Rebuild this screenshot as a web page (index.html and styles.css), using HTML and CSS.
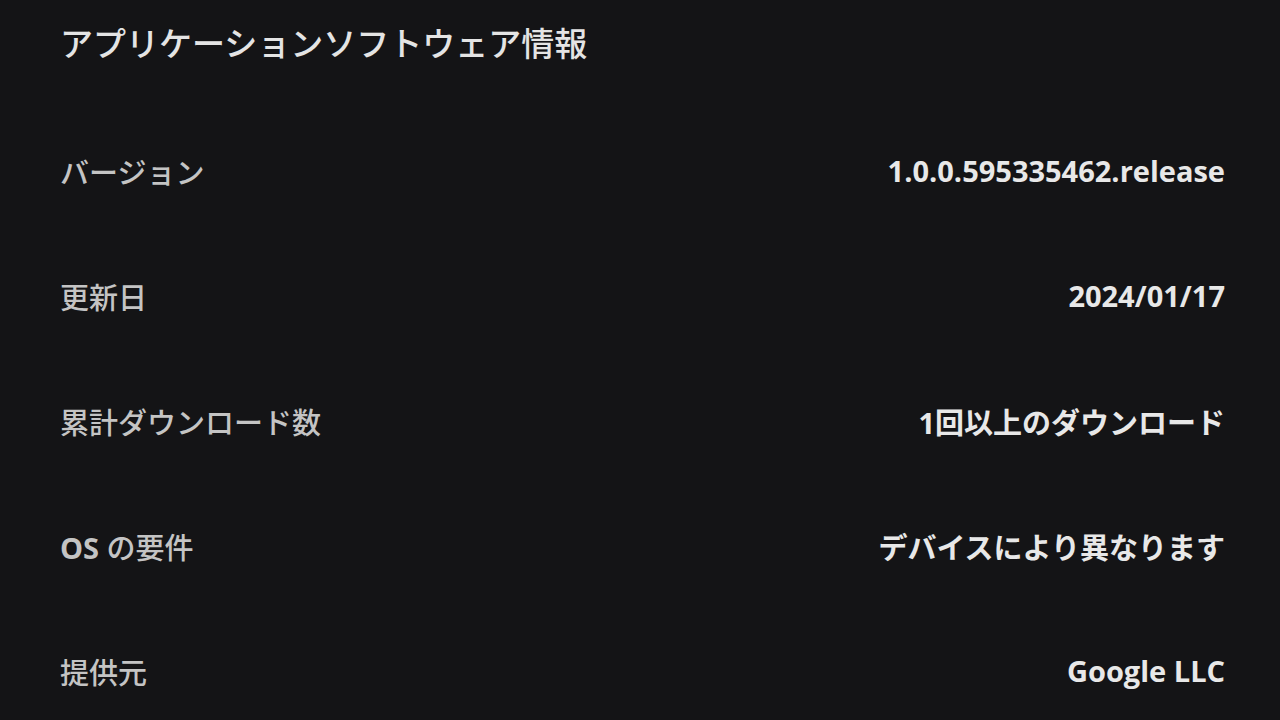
FILE: index.html
```html
<!DOCTYPE html>
<html lang="ja">
<head>
  <meta charset="UTF-8">
  <title>アプリケーションソフトウェア情報</title>
  <link rel="stylesheet" href="styles.css">
</head>
<body>
  <div class="panel">
    <h1 class="title">アプリケーションソフトウェア情報</h1>

    <div class="info-list">
      <div class="info-row">
        <span class="label">バージョン</span>
        <span class="value">1.0.0.595335462.release</span>
      </div>
      <div class="info-row">
        <span class="label">更新日</span>
        <span class="value">2024/01/17</span>
      </div>
      <div class="info-row">
        <span class="label">累計ダウンロード数</span>
        <span class="value">1回以上のダウンロード</span>
      </div>
      <div class="info-row">
        <span class="label"><span class="latin">OS</span> の要件</span>
        <span class="value">デバイスにより異なります</span>
      </div>
      <div class="info-row">
        <span class="label">提供元</span>
        <span class="value">Google LLC</span>
      </div>
    </div>
  </div>
</body>
</html>
```

FILE: styles.css
```css
* {
  box-sizing: border-box;
}

body {
  margin: 0;
  background: #141416;
  font-family: 'Open Sans', 'Noto Sans CJK JP', sans-serif;
  overflow: hidden;
}

.panel {
  width: 1280px;
  height: 720px;
  padding: 0 55px 0 60px;
}

.title {
  margin: 0;
  height: 108px;
  padding-top: 23px;
  font-size: 33px;
  line-height: 42px;
  font-weight: 500;
  color: #e4e4e4;
}

.info-list {
  display: flex;
  flex-direction: column;
}

.info-row {
  height: 125px;
  display: flex;
  align-items: center;
  justify-content: space-between;
}

.label {
  font-size: 29px;
  font-weight: 500;
  color: #c4c4c4;
}

.label .latin {
  font-weight: 700;
}

.value {
  font-size: 29px;
  font-weight: 700;
  color: #e8e8e8;
}
```
